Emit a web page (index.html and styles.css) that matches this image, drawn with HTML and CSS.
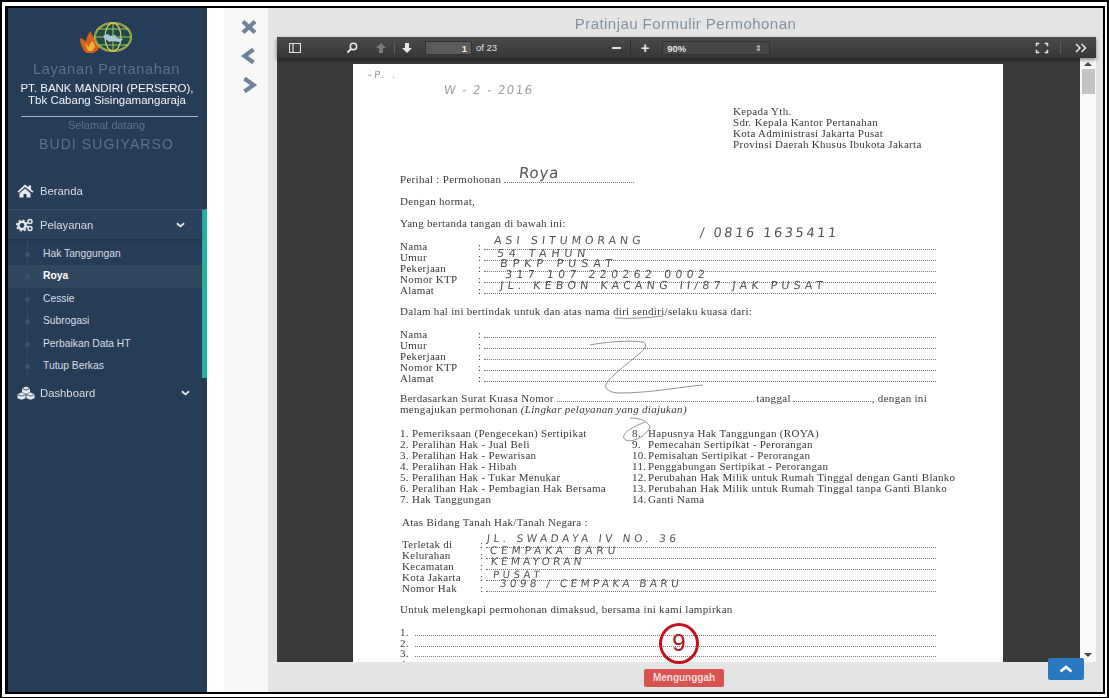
FILE: index.html
```html
<!DOCTYPE html>
<html lang="id">
<head>
<meta charset="utf-8">
<title>Pratinjau Formulir Permohonan</title>
<link rel="stylesheet" href="styles.css">
</head>
<body>
<div class="frame">
<div class="app">
  <aside class="sidebar">
    <div class="brand">
      <svg class="logo" viewBox="0 0 52 32" width="52" height="32">
        <path d="M0 17c3 1 5 2 6 4 0-4 2-8 5-11 0 3 1 5 3 6 0-2 2-4 4-5l1 12c1 4-2 8-6 9H7c-4-2-7-9-7-15z" fill="#d4601c"/>
        <path d="M5 22c2 1 3 3 3 5 1-3 3-6 5-7l2 6-3 4H8z" fill="#f0b23a"/>
        <ellipse cx="33" cy="16" rx="18" ry="14" fill="#1f4a4a" stroke="#d8bb3e" stroke-width="2"/>
        <ellipse cx="33" cy="16" rx="18" ry="14" fill="none" stroke="#3f8f4a" stroke-width=".8"/>
        <ellipse cx="33" cy="16" rx="8" ry="14" fill="none" stroke="#d8c860" stroke-width="1.300"/>
        <path d="M33 2v28M15 16h36M18 8h30M18 24h30" stroke="#9fc65a" stroke-width="1.100" fill="none"/>
        <path d="M23 15l5-2 2 2 5-1 2 3 6 1-3 3-8-1-2 1-5-3z" fill="#a9c8d8"/>
      </svg>
    </div>
    <div class="brand-title">Layanan Pertanahan</div>
    <div class="brand-org">PT. BANK MANDIRI (PERSERO),<br>Tbk Cabang Sisingamangaraja</div>
    <hr class="brand-rule">
    <div class="brand-hello">Selamat datang</div>
    <div class="brand-user">BUDI SUGIYARSO</div>

    <nav class="nav">
      <div class="nav-item nav-home">
        <svg class="nav-icon" viewBox="0 0 18 14" width="18" height="14"><path d="M9 .5l3.500 2.800V1.500h2.500v3.900l2.500 2-1 1.300L9 3 2.500 8.700l-1-1.300zM3.500 9.200L9 4.500l5.500 4.700v4.300H10.500V10h-3v3.500h-4z" fill="#e4e9ee"/></svg>
        <span>Beranda</span>
      </div>
      <div class="nav-group">
        <div class="nav-item nav-open">
          <svg class="nav-icon" viewBox="0 0 18 14" width="18" height="14">
            <circle cx="6" cy="7.500" r="3.600" fill="none" stroke="#e4e9ee" stroke-width="2.400"/>
            <circle cx="6" cy="7.500" r="5.300" fill="none" stroke="#e4e9ee" stroke-width="1.600" stroke-dasharray="2 2.160"/>
            <circle cx="14" cy="3.500" r="2" fill="none" stroke="#e4e9ee" stroke-width="1.500"/>
            <circle cx="14" cy="10.500" r="2" fill="none" stroke="#e4e9ee" stroke-width="1.500"/>
          </svg>
          <span>Pelayanan</span>
          <svg class="chev" viewBox="0 0 10 6" width="9" height="6"><path d="M1 1l4 3.500L9 1" fill="none" stroke="#e4e9ee" stroke-width="2"/></svg>
        </div>
        <ul class="sub">
          <li>Hak Tanggungan</li>
          <li class="active">Roya</li>
          <li>Cessie</li>
          <li>Subrogasi</li>
          <li>Perbaikan Data HT</li>
          <li>Tutup Berkas</li>
        </ul>
      </div>
      <div class="nav-item nav-dash">
        <svg class="nav-icon" viewBox="0 0 20 14" width="20" height="14">
          <path d="M10 .5l4 1.700v4L10 8 6 6.200v-4zM5.500 6.500l4 1.700v4l-4 1.600-4-1.600v-4zM14.500 6.500l4 1.700v4l-4 1.600-4-1.600v-4z" fill="#e4e9ee"/>
          <path d="M6 2.500l4 1.600 4-1.600M1.500 8.500l4 1.600 4-1.600M10.500 8.500l4 1.600 4-1.600" fill="none" stroke="#263d57" stroke-width=".8"/>
        </svg>
        <span>Dashboard</span>
        <svg class="chev" viewBox="0 0 10 6" width="9" height="6"><path d="M1 1l4 3.500L9 1" fill="none" stroke="#e4e9ee" stroke-width="2"/></svg>
      </div>
    </nav>
  </aside>

  <div class="rail">
    <svg class="rail-icon" viewBox="0 0 18 16" width="18" height="16"><path d="M3 2.500l12 11M15 2.500l-12 11" stroke="#6f8398" stroke-width="4.200" fill="none"/></svg>
    <svg class="rail-icon" viewBox="0 0 18 16" width="18" height="16"><path d="M13.500 1.500L4.500 8l9 6.500" stroke="#6f8398" stroke-width="4.200" fill="none"/></svg>
    <svg class="rail-icon" viewBox="0 0 18 16" width="18" height="16"><path d="M4.500 1.500l9 6.500-9 6.500" stroke="#6f8398" stroke-width="4.200" fill="none"/></svg>
  </div>

  <main class="panel">
    <h1 class="panel-title">Pratinjau Formulir Permohonan</h1>
    <section class="viewer">
      <div class="toolbar">
        <svg class="tb-sidebar" viewBox="0 0 12 10" width="12" height="10"><path d="M.5.5h11v9H.5zM4 .5v9" fill="none" stroke="#e0e0e0" stroke-width="1.200"/></svg>
        <svg class="tb-search" viewBox="0 0 12 12" width="12" height="12"><circle cx="7.500" cy="4.500" r="3.200" fill="none" stroke="#e8e8e8" stroke-width="1.500"/><path d="M5 7l-3.500 3.500" stroke="#e8e8e8" stroke-width="2"/></svg>
        <svg class="tb-up" viewBox="0 0 12 12" width="12" height="12"><path d="M6 1l5 5H8v5H4V6H1z" fill="#7c7c7c"/></svg>
        <span class="tb-sep"></span>
        <svg class="tb-down" viewBox="0 0 12 12" width="12" height="12"><path d="M6 11L1 6h3V1h4v5h3z" fill="#e8e8e8"/></svg>
        <span class="tb-page">1</span>
        <span class="tb-of">of 23</span>
        <span class="tb-zoomout"><span class="minus"></span></span>
        <span class="tb-plus">+</span>
        <span class="tb-select">90%<span class="updown">&#8661;</span></span>
        <svg class="tb-full" viewBox="0 0 14 12" width="14" height="12"><path d="M1 1h3v1H2v2H1zM13 1h-3v1h2v2h1zM1 11h3v-1H2V8H1zM13 11h-3v-1h2V8h1z" fill="#e0e0e0" stroke="#e0e0e0" stroke-width=".6"/></svg>
        <span class="tb-sep tb-sep-end"></span>
        <svg class="tb-more" viewBox="0 0 12 10" width="12" height="10"><path d="M1 1l4 4-4 4M6.500 1l4 4-4 4" fill="none" stroke="#e8e8e8" stroke-width="1.500"/></svg>
      </div>
      <div class="viewer-body">
        <div class="canvas">
          <article class="page">
            <div class="addr">Kepada Yth.<br>Sdr. Kepala Kantor Pertanahan<br>Kota Administrasi Jakarta Pusat<br>Provinsi Daerah Khusus Ibukota Jakarta</div>

            <div class="line g24 perihal"><span>Perihal : Permohonan</span><i class="dots"></i></div>
            <p class="line g11">Dengan hormat,</p>
            <p class="line g11">Yang bertanda tangan di bawah ini:</p>

            <div class="form g12">
              <div class="row"><span class="lbl">Nama</span><span>:</span><i class="dots"></i></div>
              <div class="row"><span class="lbl">Umur</span><span>:</span><i class="dots"></i></div>
              <div class="row"><span class="lbl">Pekerjaan</span><span>:</span><i class="dots"></i></div>
              <div class="row"><span class="lbl">Nomor KTP</span><span>:</span><i class="dots"></i></div>
              <div class="row"><span class="lbl">Alamat</span><span>:</span><i class="dots"></i></div>
            </div>

            <p class="line g10">Dalam hal ini bertindak untuk dan atas nama diri sendiri/selaku kuasa dari:</p>

            <div class="form g12">
              <div class="row"><span class="lbl">Nama</span><span>:</span><i class="dots"></i></div>
              <div class="row"><span class="lbl">Umur</span><span>:</span><i class="dots"></i></div>
              <div class="row"><span class="lbl">Pekerjaan</span><span>:</span><i class="dots"></i></div>
              <div class="row"><span class="lbl">Nomor KTP</span><span>:</span><i class="dots"></i></div>
              <div class="row"><span class="lbl">Alamat</span><span>:</span><i class="dots"></i></div>
            </div>

            <div class="line g9 surat"><span>Berdasarkan Surat Kuasa Nomor</span><i class="dots"></i><span>tanggal</span><i class="dots dots-date"></i><span>, dengan ini</span></div>
            <p class="line">mengajukan permohonan <em>(Lingkar pelayanan yang diajukan)</em></p>

            <div class="services g13">
              <span>1. Pemeriksaan (Pengecekan) Sertipikat</span><span class="no">8.</span><span>Hapusnya Hak Tanggungan (ROYA)</span>
              <span>2. Peralihan Hak - Jual Beli</span><span class="no">9.</span><span>Pemecahan Sertipikat - Perorangan</span>
              <span>3. Peralihan Hak - Pewarisan</span><span class="no">10.</span><span>Pemisahan Sertipikat - Perorangan</span>
              <span>4. Peralihan Hak - Hibah</span><span class="no">11.</span><span>Penggabungan Sertipikat - Perorangan</span>
              <span>5. Peralihan Hak - Tukar Menukar</span><span class="no">12.</span><span>Perubahan Hak Milik untuk Rumah Tinggal dengan Ganti Blanko</span>
              <span>6. Peralihan Hak - Pembagian Hak Bersama</span><span class="no">13.</span><span>Perubahan Hak Milik untuk Rumah Tinggal tanpa Ganti Blanko</span>
              <span>7. Hak Tanggungan</span><span class="no">14.</span><span>Ganti Nama</span>
            </div>

            <p class="line g12 indent">Atas Bidang Tanah Hak/Tanah Negara :</p>

            <div class="form g11 indent">
              <div class="row"><span class="lbl">Terletak di</span><span>:</span><i class="dots"></i></div>
              <div class="row"><span class="lbl">Kelurahan</span><span>:</span><i class="dots"></i></div>
              <div class="row"><span class="lbl">Kecamatan</span><span>:</span><i class="dots"></i></div>
              <div class="row"><span class="lbl">Kota Jakarta</span><span>:</span><i class="dots"></i></div>
              <div class="row"><span class="lbl">Nomor Hak</span><span>:</span><i class="dots"></i></div>
            </div>

            <p class="line g10">Untuk melengkapi permohonan dimaksud, bersama ini kami lampirkan</p>

            <div class="attach g12">
              <div class="row"><span class="num">1.</span><i class="dots"></i></div>
              <div class="row"><span class="num">2.</span><i class="dots"></i></div>
              <div class="row"><span class="num">3.</span><i class="dots"></i></div>
              <div class="row"><span class="num">4.</span><i class="dots"></i></div>
            </div>

            <span class="hw hw-date">W - 2 - 2016</span>
            <span class="hw hw-mark">-P. .</span>
            <span class="hw hw-roya">Roya</span>
            <span class="hw hw-name">ASI SITUMORANG</span>
            <span class="hw hw-phone">/ 0816 1635411</span>
            <span class="hw hw-age">54 TAHUN</span>
            <span class="hw hw-job">BPKP PUSAT</span>
            <span class="hw hw-ktp">317 107 220262 0002</span>
            <span class="hw hw-addr">JL. KEBON KACANG II/87 JAK PUSAT</span>
            <span class="hw hw-land">JL. SWADAYA IV NO. 36</span>
            <span class="hw hw-kel">CEMPAKA BARU</span>
            <span class="hw hw-kec">KEMAYORAN</span>
            <span class="hw hw-kota">PUSAT</span>
            <span class="hw hw-hak">3098 / CEMPAKA BARU</span>

            <svg class="ink" viewBox="0 0 650 600" width="650" height="600">
              <path d="M237 281c15-3 40-5 52-3 6 1 4 6-2 11-13 11-30 24-34 31-2 5 4 9 14 9 30 0 60-6 83-8" />
              <path d="M262 254c15 1 32 0 48-2" />
              <path d="M292 358c-10 4-18 8-21 13-2 5 4 7 10 5 8-2 14-8 16-13-2-6-10-9-20-9" />
            </svg>
          </article>
        </div>
        <div class="scrollbar">
          <span class="sb-up"></span>
          <span class="sb-thumb"></span>
          <span class="sb-down"></span>
        </div>
      </div>
    </section>
    <footer class="panel-foot"><button class="btn-upload" type="button">Mengunggah</button></footer>
    <span class="step">9</span>
    <button class="to-top" type="button" aria-label="Ke atas"><svg viewBox="0 0 14 8" width="14" height="8"><path d="M1.500 6.500L7 2l5.500 4.500" fill="none" stroke="#fff" stroke-width="2.800"/></svg></button>
  </main>
</div>
</div>
</body>
</html>
```

FILE: styles.css
```css
* { box-sizing: border-box; }
html, body { margin: 0; height: 698px; overflow: hidden; background: #fff; }
body { font-family: "Liberation Sans", Arial, sans-serif; }

.frame {
  width: 1109px; height: 698px;
  border: 2px solid #000; border-bottom-width: 1px;
  padding: 4px 2px 3px 3px;
  background: #fff;
}
.app {
  height: 100%;
  border: 2px solid #000; border-left-width: 3px;
  display: flex;
}

/* sidebar */
.sidebar { width: 199px; flex: none; background: #263d57; padding-top: 13px; }
.brand { display: flex; justify-content: center; padding-right: 3px; }
.logo { display: block; filter: blur(.4px); }
.brand-title { margin-top: 7px; padding-right: 2px; line-height: 18px; text-align: center; font-size: 14.500px; letter-spacing: .7px; color: #5e7389; filter: blur(.25px); }
.brand-org { margin-top: 4px; padding-right: 1px; line-height: 12px; text-align: center; font-size: 11.500px; color: #f2f4f7; filter: blur(.25px); }
.brand-rule { margin: 10px 9px 0 13px; border: 0; border-top: 1px solid #a8b7c6; height: 1px; }
.brand-hello { margin-top: 2px; padding-right: 2px; line-height: 12px; text-align: center; font-size: 11px; color: #5e7389; filter: blur(.25px); }
.brand-user { margin-top: 4px; padding-right: 2px; line-height: 18px; text-align: center; font-size: 14px; letter-spacing: 1.100px; color: #5e7389; filter: blur(.25px); }

.nav { margin-top: 20px; font-size: 11.300px; color: #d6dee6; }
.nav-item { display: flex; align-items: center; }
.nav-icon { position: relative; flex: none; margin-left: 8px; margin-right: 6px; }
.nav-item span { flex: 1; filter: blur(.2px); }
.chev { flex: none; }
.nav-home { height: 36px; }
.nav-group { border-top: 1px solid #3b5169; border-right: 5px solid #20b59d; }
.nav-open { height: 29px; background: #2a415b; box-shadow: 0 1px 2px rgba(0,0,0,.25); }
.nav-open .chev { margin-right: 17px; }
.nav-dash { height: 30px; }
.nav-dash .nav-icon { margin-right: 4px; }
.nav-dash .chev { margin-right: 17px; }

.sub { list-style: none; margin: 0; padding: 3.500px 0 0; position: relative; font-size: 10.300px; }
.sub::before { content: ""; position: absolute; left: 19px; top: 0; bottom: 2px; width: 1px; background: #34495f; }
.sub li { height: 22.500px; line-height: 22.500px; padding-left: 35px; position: relative; }
.sub li::before { content: ""; position: absolute; left: 17px; top: 9px; width: 5px; height: 5px; border-radius: 50%; background: #3c536b; }
.sub li.active { background: #31475f; color: #fff; font-weight: bold; }

/* rail */
.rail {
  width: 61px; flex: none;
  background: linear-gradient(to right, #fff 17px, #f8f8f7 17px);
  padding: 11px 0 0 33px;
  display: flex; flex-direction: column; gap: 13px;
}
.rail-icon { display: block; filter: blur(.3px); }

/* panel */
.panel { flex: 1; min-width: 0; background: #e4e4e4; display: flex; flex-direction: column; position: relative; }
.panel-title { margin: 0; height: 29px; line-height: 32px; text-align: center; font-size: 15px; font-weight: normal; letter-spacing: .45px; color: #8392a1; filter: blur(.2px); }
.viewer { margin: 0 7px 0 9px; height: 625px; display: flex; flex-direction: column; background: #3a3a38; }

.toolbar {
  height: 21px; flex: none;
  background: linear-gradient(#4b4b4b, #363636);
  box-shadow: 0 2px 4px rgba(0,0,0,.45);
  position: relative; z-index: 1;
  display: flex; align-items: center;
  font-size: 9.500px; font-weight: bold; color: #e2e2e2;
}
.toolbar svg { flex: none; display: block; }
.tb-sidebar { margin-left: 12px; }
.tb-search { margin-left: 45px; }
.tb-up { margin-left: 17px; }
.tb-sep { width: 1px; height: 12px; background: #5c5c5c; margin-left: 7px; flex: none; }
.tb-down { margin-left: 6px; }
.tb-page {
  width: 47px; height: 14px; margin-left: 12px; padding-right: 4px;
  line-height: 14px; text-align: right;
  background: #5a5a5a; border: 1px solid #333; color: #eee;
}
.tb-of { margin-left: 4px; font-weight: normal; }
.tb-zoomout {
  width: 28px; height: 15px; margin-left: 106px;
  border-right: 1px solid #2c2c2c;
  display: flex; align-items: center; justify-content: center;
}
.minus { width: 9px; height: 2px; background: #ddd; }
.tb-plus { margin-left: 9px; width: 10px; font-size: 15px; line-height: 15px; text-align: center; font-weight: bold; }
.tb-select {
  width: 108px; height: 14px; margin-left: 12px; padding: 0 7px 0 4px;
  line-height: 14px; display: flex; justify-content: space-between;
  background: #464646; border: 1px solid #333;
}
.updown { font-size: 8px; font-weight: normal; }
.tb-full { margin-left: 265px; }
.tb-sep-end { margin-left: 11px; }
.tb-more { margin-left: 14px; }

.viewer-body { flex: 1; min-height: 0; display: flex; }
.canvas { flex: 1; min-width: 0; overflow: hidden; padding: 6px 0 0 76px; }
.page {
  width: 650px; height: 640px; background: #fff;
  position: relative;
  padding: 42px 0 0 47px;
  font-family: "Liberation Serif", "Times New Roman", serif;
  font-size: 11px; letter-spacing: .3px; line-height: 11px; color: #3a3a3a;
  filter: blur(.4px);
}
.addr { margin-left: 333px; }
.line { margin: 0; display: flex; width: 536px; }
p.line { display: block; width: auto; white-space: normal; }
.g9 { margin-top: 9px; } .g10 { margin-top: 10px; } .g11 { margin-top: 11px; }
.g12 { margin-top: 12px; } .g13 { margin-top: 13px; } .g24 { margin-top: 24px; }
.indent { margin-left: 2px; }
.dots { flex: 1; border-bottom: 1px dotted #777; height: 9px; margin: 0 2px 0 3px; min-width: 0; }
.perihal { width: 236px; }
.surat { width: 527px; }
.dots-date { flex: none; width: 78px; margin: 0 1px 0 2px; }
.form, .attach { width: 538px; }
.form.indent { width: 536px; }
.row { display: flex; height: 11px; }
.lbl { width: 78px; flex: none; }
.num { width: 12px; flex: none; }
.attach .row { height: 10.500px; line-height: 10px; }
.services { display: grid; grid-template-columns: 232px 16px auto; justify-content: start; white-space: nowrap; }
.no { white-space: nowrap; }

.hw { position: absolute; white-space: nowrap; font-family: "DejaVu Sans", sans-serif; font-size: 11px; line-height: 14px; letter-spacing: 0; color: #555; font-weight: normal; transform: skewX(-6deg); }
.hw-date { left: 91px; top: 19px; font-size: 12px; letter-spacing: 1.300px; color: #a0a0a0; }
.hw-mark { left: 15px; top: 4px; font-size: 10px; letter-spacing: 2.500px; color: #999; }
.hw-roya { left: 166px; top: 102px; font-size: 15px; letter-spacing: .8px; }
.hw-name { left: 141px; top: 170px; letter-spacing: 3.900px; }
.hw-phone { left: 347px; top: 162px; font-size: 13px; letter-spacing: 2.500px; }
.hw-age { left: 144px; top: 183px; letter-spacing: 4.700px; }
.hw-job { left: 147px; top: 193px; letter-spacing: 5px; }
.hw-ktp { left: 152px; top: 204px; letter-spacing: 4.300px; }
.hw-addr { left: 147px; top: 215px; letter-spacing: 4.200px; font-size: 11px; }
.hw-land { left: 134px; top: 467px; letter-spacing: 3.500px; font-size: 10.500px; }
.hw-kel { left: 137px; top: 479px; letter-spacing: 3.900px; font-size: 10.500px; }
.hw-kec { left: 138px; top: 490px; letter-spacing: 3.200px; font-size: 10.500px; }
.hw-kota { left: 140px; top: 504px; letter-spacing: 3.600px; font-size: 10px; }
.hw-hak { left: 147px; top: 512px; letter-spacing: 3.300px; font-size: 10.500px; }
.ink { position: absolute; left: 0; top: 0; fill: none; stroke: #777; stroke-width: .8; }

.scrollbar { width: 16px; flex: none; background: #f9f9f9; position: relative; display: flex; flex-direction: column; align-items: center; }
.sb-up { margin-top: 4px; border: 4px solid transparent; border-top: 0; border-bottom: 4px solid #444; }
.sb-thumb { width: 13px; height: 25px; margin-top: 3px; background: #c4c4c4; }
.sb-down { margin-top: auto; margin-bottom: 5px; border: 4px solid transparent; border-bottom: 0; border-top: 4px solid #444; }

.panel-foot { flex: 1; display: flex; align-items: flex-start; justify-content: center; padding: 7px 3px 0 0; }
.btn-upload {
  width: 80px; height: 18px; padding: 0;
  background: #d9534f; border: 0; border-radius: 2px;
  font: bold 10px/18px "Liberation Sans", Arial, sans-serif; color: #f4dcdb;
}
.step {
  position: absolute; left: 391px; top: 615px;
  width: 40px; height: 41px; border-radius: 50%;
  border: 3.500px solid #c5101f;
  text-align: center; font-size: 24px; line-height: 34px; color: #b9101c;
}
.to-top {
  position: absolute; left: 780px; top: 650px;
  width: 36px; height: 22px; padding: 0;
  background: #2b78c0; border: 0; border-radius: 2px;
  display: flex; align-items: center; justify-content: center;
}
.to-top svg { display: block; }
```
